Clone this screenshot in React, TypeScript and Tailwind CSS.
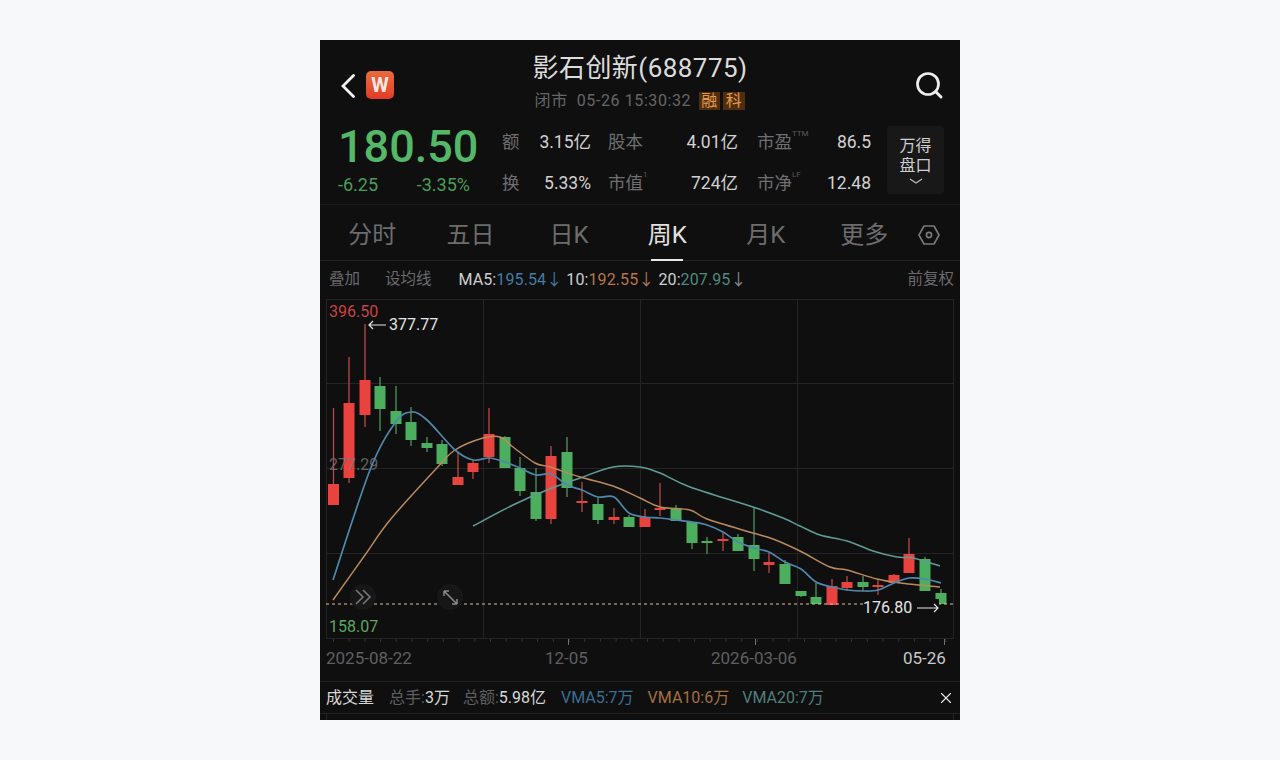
import { X } from 'lucide-react';

const FONT = { fontFamily: 'Roboto, "Noto Sans CJK SC", sans-serif' };

// x, wick top, body top, body bottom, wick bottom, 1 = up (red)
const CANDLES: [number, number, number, number, number, number][] = [
  [333.5, 408, 484, 505, 505, 1],
  [349, 357, 403, 478, 483, 1],
  [365, 324, 380, 415, 427, 1],
  [380, 377, 386, 409, 431, 0],
  [396, 386, 411, 424, 434, 0],
  [411, 407, 422, 440, 446, 0],
  [427, 437, 443, 448, 452, 0],
  [442, 440, 444, 464, 466, 0],
  [458, 452, 477, 485, 485, 1],
  [473, 460, 463, 472, 479, 1],
  [489, 408, 434, 457, 463, 1],
  [505, 436, 437, 468, 468, 0],
  [520, 457, 468, 491, 496, 0],
  [536, 468, 492, 519, 521, 0],
  [551, 446, 456, 519, 524, 1],
  [567, 437, 452, 488, 497, 0],
  [582, 482, 501, 503, 512, 1],
  [598, 498, 504, 520, 524, 0],
  [614, 508, 517, 520, 524, 1],
  [629, 515, 517, 527, 527, 0],
  [645, 509, 517, 527, 527, 1],
  [660, 483, 508, 510, 516, 1],
  [676, 505, 509, 521, 521, 0],
  [692, 521, 522, 543, 549, 0],
  [707, 537, 541, 543, 554, 0],
  [723, 533, 539, 541, 551, 1],
  [738, 534, 537, 551, 551, 0],
  [754, 508, 545, 559, 571, 0],
  [769, 553, 562, 565, 573, 1],
  [785, 560, 564, 584, 584, 0],
  [801, 591, 591, 596, 597, 0],
  [816, 583, 597, 604, 604, 0],
  [832, 579, 586, 605, 605, 1],
  [847, 576, 582, 588, 591, 1],
  [863, 576, 582, 587, 591, 0],
  [878, 579, 585, 587, 595, 1],
  [894, 574, 575, 583, 583, 1],
  [909, 538, 554, 573, 573, 1],
  [925, 557, 559, 591, 591, 0],
  [941, 589, 593, 604, 604, 0],
];

const MA5 =
  '333,580 370,470 395,423 411,412 427,420 455,450 473,460 489,458 505,462 520,468 536,475 551,474 567,485 582,490 598,497 614,497 629,513 645,517 660,518 676,520 692,522 707,525 723,532 738,542 754,548 769,552 785,562 801,569 816,582 832,587 847,590 863,591 878,590 894,583 909,578 925,579 941,583';
const MA10 =
  '333,600 365,555 390,520 435,470 455,450 483,438 500,437 513,447 535,463 550,467 580,477 613,486 640,498 660,507 690,510 707,519 753,533 773,539 800,551 830,567 847,570 877,579 900,583 940,587';
const MA20 =
  '473,526 513,505 547,490 580,478 613,467 640,467 660,473 690,487 753,507 783,518 800,526 820,535 847,541 873,551 897,557 913,558 940,566';

// catmull-rom through the sampled points, so the averages read as curves
function smooth(points: string) {
  const p = points.split(' ').map((s) => s.split(',').map(Number));
  let d = `M${p[0][0]} ${p[0][1]}`;
  for (let i = 0; i < p.length - 1; i++) {
    const a = p[Math.max(i - 1, 0)];
    const b = p[i];
    const c = p[i + 1];
    const e = p[Math.min(i + 2, p.length - 1)];
    d += `C${b[0] + (c[0] - a[0]) / 6} ${b[1] + (c[1] - a[1]) / 6} ${c[0] - (e[0] - b[0]) / 6} ${c[1] - (e[1] - b[1]) / 6} ${c[0]} ${c[1]}`;
  }
  return d;
}

function Stat({ label, sup, value, width }: { label: string; sup?: string; value: string; width: string }) {
  return (
    <div className={`flex items-center justify-between ${width}`}>
      <span className="relative text-[17.5px] text-[#6f6f70]">
        {label}
        {sup && <sup className="absolute left-full top-[-1px] text-[8px] leading-none text-[#5a5a5b]">{sup}</sup>}
      </span>
      <span className="text-[17.5px] text-[#d2d2d2]">{value}</span>
    </div>
  );
}

function Chart() {
  return (
    <div className="relative h-[346px] shrink-0">
      <svg viewBox="320 299 640 346" className="block h-full w-full">
        <g stroke="#242425" strokeWidth="1" fill="none">
          <rect x="326.5" y="299.5" width="627" height="339" />
          <path d="M483.5 299V639M640.5 299V639M797.5 299V639M326 383.5H954M326 468.5H954M326 553.5H954" />
        </g>
        <path
          d={Array.from({ length: 40 }, (_, i) => `M${333.5 + i * 15.7} 639v3`).join('')}
          stroke="#333334"
          fill="none"
        />
        <path d="M568.5 639v6M755.5 639v6M944.5 639v6" stroke="#707071" fill="none" />
        {CANDLES.map(([x, wt, bt, bb, wb, up]) => (
          <g key={x}>
            <line x1={x} x2={x} y1={wt} y2={wb} stroke={up ? '#b9494a' : '#4f9560'} strokeWidth="1.3" />
            <rect
              x={x - 5.5}
              y={bt}
              width="11"
              height={Math.max(bb - bt, 2)}
              fill={up ? '#e8433f' : '#4cae5f'}
            />
          </g>
        ))}
        <path d={smooth(MA20)} fill="none" stroke="#5f9c98" strokeWidth="1.5" />
        <path d={smooth(MA10)} fill="none" stroke="#b98a5c" strokeWidth="1.5" />
        <path d={smooth(MA5)} fill="none" stroke="#4f88ad" strokeWidth="1.7" />
        <line x1="326" x2="954" y1="604" y2="604" stroke="#e8b9a8" strokeWidth="1.2" strokeDasharray="3 3" />
        <circle cx="363" cy="597" r="13" fill="#171718" />
        <path d="M356 590l7 7-7 7M363 590l7 7-7 7" stroke="#77777a" strokeWidth="1.6" fill="none" />
        <circle cx="450" cy="597" r="13" fill="#171718" />
        <path
          d="M444 591l13 13M444 591h5M444 591v5M457 604h-5M457 604v-5"
          stroke="#8a8a8c"
          strokeWidth="1.5"
          fill="none"
        />
      </svg>
      <span className="absolute left-[9px] top-[4px] text-[16px] leading-[18px] text-[#c94343]">396.50</span>
      <span className="absolute left-[48px] top-[17px] flex items-center text-[16px] leading-[18px] text-[#e6e6e6]">
        <svg viewBox="0 0 18 10" className="mr-[3px] h-[10px] w-[18px]" fill="none">
          <path d="M18 5H1M5 1L1 5l4 4" stroke="#e6e6e6" strokeWidth="1.2" />
        </svg>
        377.77
      </span>
      <span className="absolute left-[9px] top-[157px] text-[16px] leading-[18px] text-[#77777a]/80">277.29</span>
      <span className="absolute left-[9px] top-[319px] text-[16px] leading-[18px] text-[#59a85f]">158.07</span>
      <span className="absolute left-[543px] top-[300px] flex items-center bg-[#0f0f10] text-[16px] leading-[18px] text-[#e6e6e6]">
        176.80
        <svg viewBox="0 0 22 10" className="ml-[5px] h-[10px] w-[22px]" fill="none">
          <path d="M0 5h21M17 1l4 4-4 4" stroke="#e6e6e6" strokeWidth="1.2" />
        </svg>
      </span>
    </div>
  );
}

export default function App() {
  return (
    <div className="flex min-h-screen items-center justify-center bg-[#f6f8fa]" style={FONT}>
      <div className="flex h-[680px] w-[640px] flex-col overflow-hidden bg-[#0f0f10]">
        {/* Nav */}
        <div className="relative flex h-[80px] shrink-0 items-start pl-[21px] pt-[31px]">
          <svg viewBox="0 0 14 24" className="mt-[3px] h-[24px] w-[14px]" fill="none">
            <path d="M12.5 1.5L2 12l10.5 10.5" stroke="#f2f2f2" strokeWidth="2.8" strokeLinecap="round" />
          </svg>
          <div className="ml-[11px] flex h-[28px] w-[28px] items-center justify-center rounded-[5px] bg-gradient-to-b from-[#e86a3c] to-[#e23a28] text-[20px] font-bold text-[#f8e8e0]">
            W
          </div>
          <div className="absolute left-0 right-0 top-[10px] flex flex-col items-center">
            <div className="text-[26px] leading-[36px] tracking-[0.45px] text-[#dcdcdc]">影石创新(688775)</div>
            <div className="mt-[6px] flex items-center text-[16px] leading-[18px] tracking-[0.6px] text-[#666667]">
              <span className="mr-[9px]">闭市</span>
              <span className="mr-[8px]">05-26 15:30:32</span>
              <span className="mr-[3px] bg-[#4f2e0e] px-[2px] text-[#e39a4e]">融</span>
              <span className="bg-[#4f2e0e] px-[3px] text-[#e39a4e]">科</span>
            </div>
          </div>
          <svg viewBox="0 0 30 30" className="absolute left-[594px] top-[30px] h-[30px] w-[30px]" fill="none">
            <circle cx="14" cy="14" r="10.5" stroke="#eeeeee" strokeWidth="2.7" />
            <path d="M22 22l5 5" stroke="#eeeeee" strokeWidth="2.9" strokeLinecap="round" />
          </svg>
        </div>

        {/* Quote */}
        <div className="flex h-[85px] shrink-0 items-start border-b border-[#1c1c1d] pl-[18px]">
          <div className="w-[164px] shrink-0">
            <div className="text-[45px] font-medium leading-[54px] text-[#55b768]">180.50</div>
            <div className="mt-[1px] flex w-[132px] justify-between text-[18px] leading-[20px] text-[#4a9d5a]">
              <span>-6.25</span>
              <span>-3.35%</span>
            </div>
          </div>
          <div className="flex flex-col gap-[19px] pt-[11px] leading-[22px]">
            <div className="flex">
              <Stat label="额" value="3.15亿" width="w-[89px]" />
              <Stat label="股本" value="4.01亿" width="ml-[17px] w-[130px]" />
              <Stat label="市盈" sup="TTM" value="86.5" width="ml-[19px] w-[114px]" />
            </div>
            <div className="flex">
              <Stat label="换" value="5.33%" width="w-[89px]" />
              <Stat label="市值" sup="1" value="724亿" width="ml-[17px] w-[130px]" />
              <Stat label="市净" sup="LF" value="12.48" width="ml-[19px] w-[114px]" />
            </div>
          </div>
          <div className="ml-[16px] mt-[6px] flex h-[68px] w-[57px] flex-col items-center rounded-[3px] bg-[#181819] pt-[10px] text-[16px] leading-[20px] text-[#cfcfcf]">
            <span>万得</span>
            <span>盘口</span>
            <svg viewBox="0 0 14 6" className="mt-[2px] h-[6px] w-[14px]" fill="none">
              <path d="M1 1l6 4 6-4" stroke="#b5b5b5" strokeWidth="1.4" />
            </svg>
          </div>
        </div>

        {/* Tabs */}
        <div className="relative flex h-[56px] shrink-0 items-center border-b border-[#232324] pl-[3px] pt-[4px] text-[24px] text-[#6d6d6e]">
          <span className="w-[98.4px] text-center">分时</span>
          <span className="w-[98.4px] text-center">五日</span>
          <span className="w-[98.4px] text-center">日K</span>
          <span className="relative w-[98.4px] text-center text-[#e2e2e2]">
            周K
            <span className="absolute bottom-[-8px] left-[33px] h-[2px] w-[32px] bg-[#e8e8e8]" />
          </span>
          <span className="w-[98.4px] text-center">月K</span>
          <span className="w-[98.4px] text-center">更多</span>
          <svg viewBox="0 0 22 20" className="ml-[5px] h-[20px] w-[22px]" fill="none">
            <path d="M6 1h10l5 9-5 9H6l-5-9z" stroke="#7a7a7b" strokeWidth="1.6" strokeLinejoin="round" />
            <circle cx="11" cy="10" r="2.6" stroke="#7a7a7b" strokeWidth="1.6" />
          </svg>
        </div>

        {/* MA legend */}
        <div className="flex h-[38px] shrink-0 items-center pl-[9px] pr-[6px] text-[15.5px] text-[#6a6a6b]">
          <span>叠加</span>
          <span className="ml-[25px]">设均线</span>
          <span className="ml-[27px] text-[16px] tracking-[0.1px] text-[#cfcfcf]">
            MA5:<span className="text-[#3f7ea6]">195.54↓</span> 10:<span className="text-[#b5774a]">192.55↓</span> 20:
            <span className="text-[#4f8a80]">207.95</span>
            <span className="text-[#8a8a8b]">↓</span>
          </span>
          <span className="ml-auto">前复权</span>
        </div>

        <Chart />

        {/* Dates */}
        <div className="relative h-[37px] shrink-0 border-b border-[#232324] text-[17px] leading-[27px] text-[#5f5f60]">
          <span className="absolute left-[6px]">2025-08-22</span>
          <span className="absolute left-[225px]">12-05</span>
          <span className="absolute left-[391px]">2026-03-06</span>
          <span className="absolute left-[583px] text-[#c8c8c8]">05-26</span>
        </div>

        {/* Volume */}
        <div className="flex h-[32px] shrink-0 items-center border-b border-[#232324] pl-[6px] pr-[5px] text-[16px]">
          <span className="text-[#d8d8d8]">成交量</span>
          <span className="ml-[15px] text-[#5f5f60]">
            总手:<span className="text-[#d8d8d8]">3万</span>
          </span>
          <span className="ml-[13px] text-[#5f5f60]">
            总额:<span className="text-[#d8d8d8]">5.98亿</span>
          </span>
          <span className="ml-[15px] text-[#3a6f95]">VMA5:7万</span>
          <span className="ml-[14px] text-[#a5703f]">VMA10:6万</span>
          <span className="ml-[13px] text-[#4f7f7a]">VMA20:7万</span>
          <X className="ml-auto h-[18px] w-[18px] text-[#e8e8e8]" strokeWidth={1.5} />
        </div>
        <div className="mx-[6px] flex-1 border-x border-[#232324]" />
      </div>
    </div>
  );
}
